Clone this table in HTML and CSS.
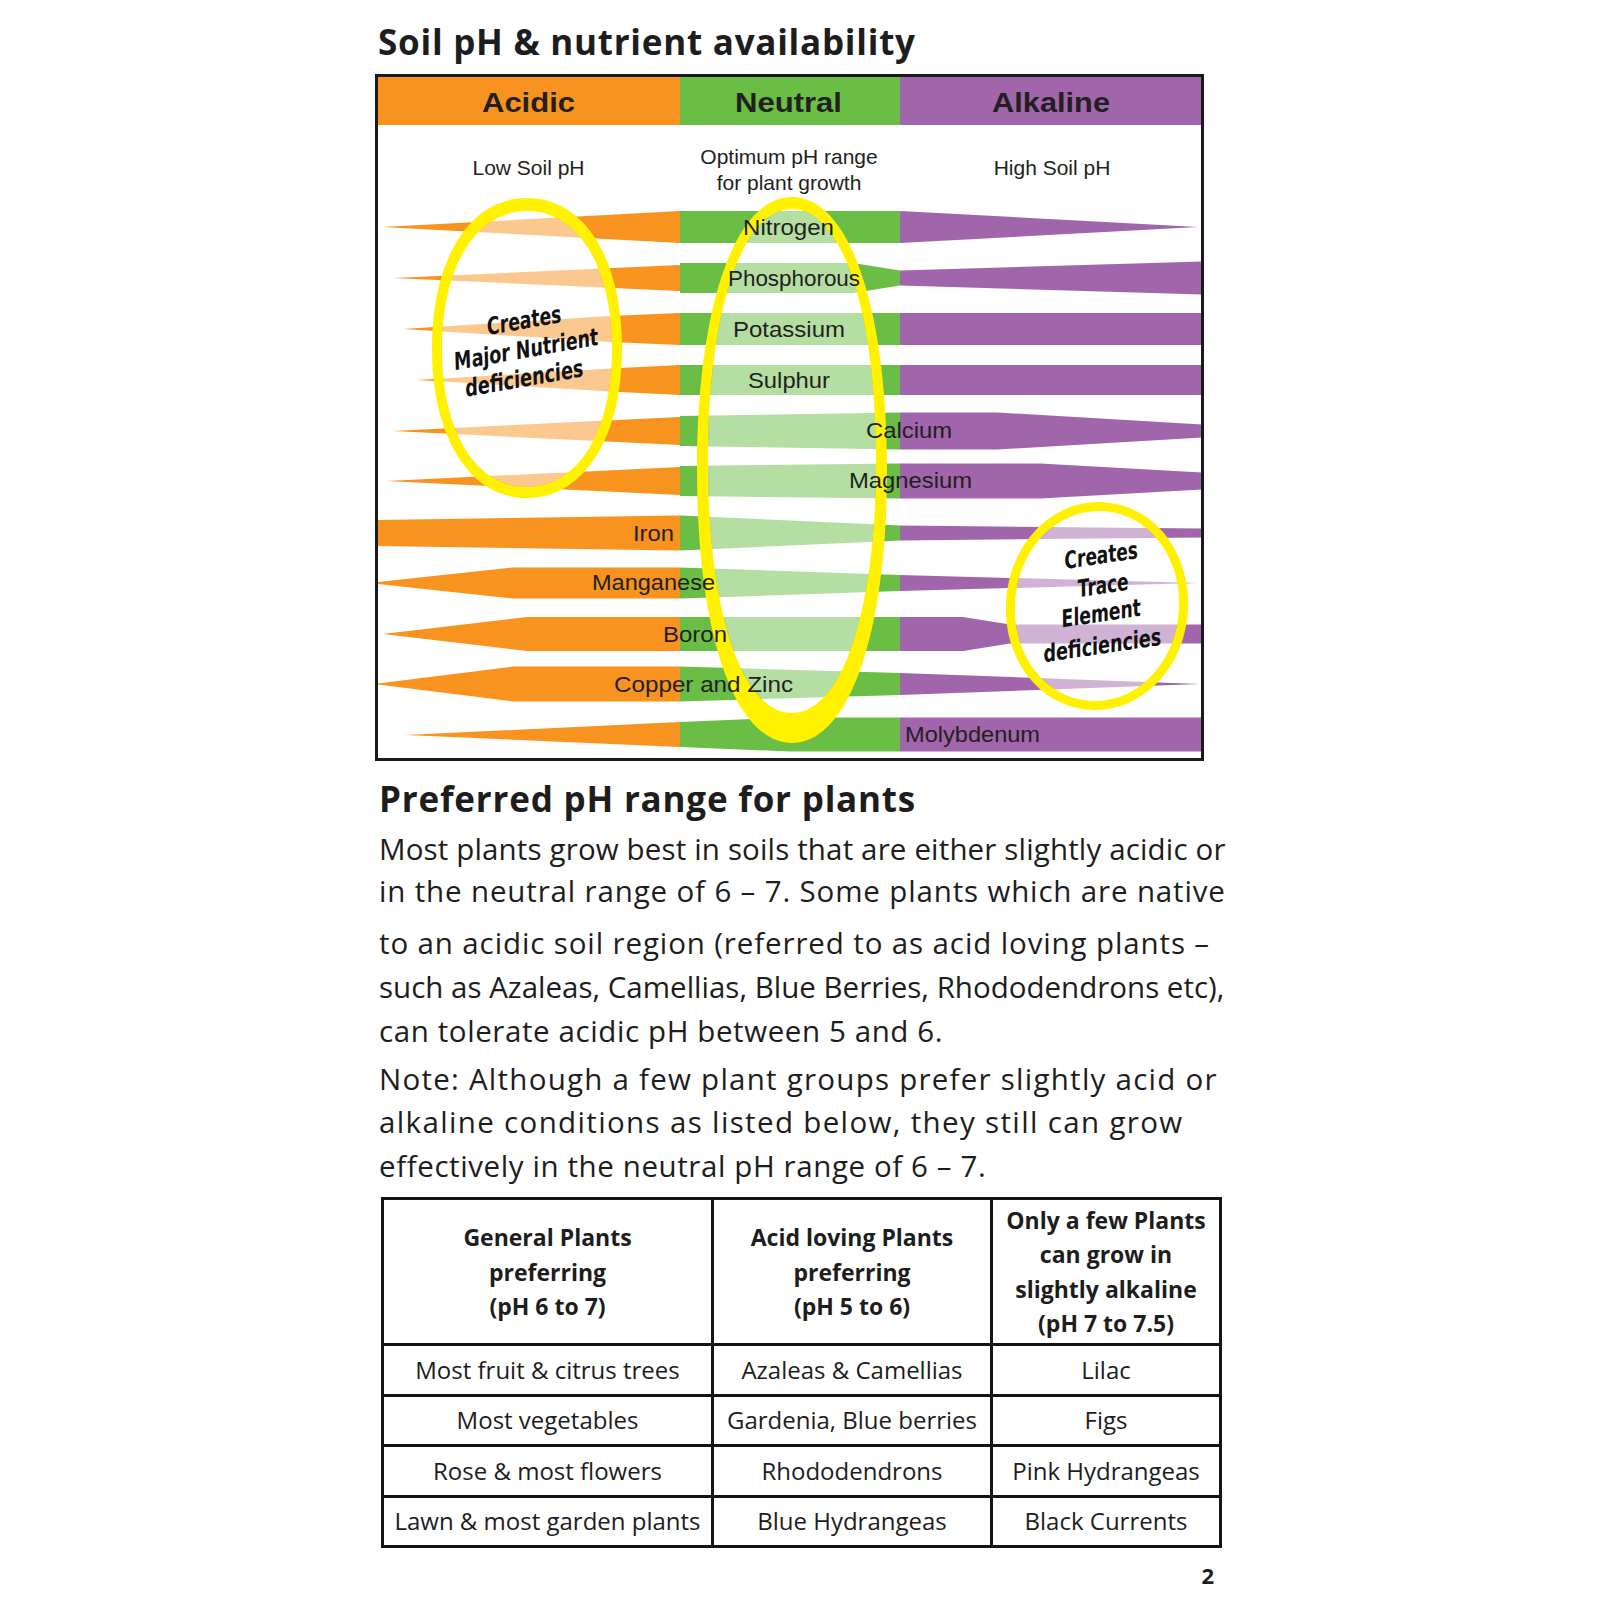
FILE: index.html
```html
<!DOCTYPE html>
<html lang="en">
<head>
<meta charset="utf-8">
<title>Soil pH &amp; nutrient availability</title>
<link rel="stylesheet" href="styles.css">
</head>
<body>
<div class="page">
  <h1 class="title">Soil pH &amp; nutrient availability</h1>

  <svg class="chart" width="829" height="688" viewBox="375 74 829 688" xmlns="http://www.w3.org/2000/svg">
    <defs>
      <linearGradient id="zones" gradientUnits="userSpaceOnUse" x1="378" y1="0" x2="1202" y2="0">
        <stop offset="0" stop-color="#F7931E"/>
        <stop offset="0.3665" stop-color="#F7931E"/>
        <stop offset="0.3665" stop-color="#6ABD45"/>
        <stop offset="0.6335" stop-color="#6ABD45"/>
        <stop offset="0.6335" stop-color="#A065AB"/>
        <stop offset="1" stop-color="#A065AB"/>
      </linearGradient>
    </defs>

    <rect class="band" x="378" y="77" width="824" height="48"/>
    <text class="ch-h" x="528.5" y="112" text-anchor="middle" textLength="93" lengthAdjust="spacingAndGlyphs">Acidic</text>
    <text class="ch-h" x="788.5" y="112" text-anchor="middle" textLength="107" lengthAdjust="spacingAndGlyphs">Neutral</text>
    <text class="ch-h" x="1051" y="112" text-anchor="middle" textLength="118" lengthAdjust="spacingAndGlyphs">Alkaline</text>

    <text class="ch-s" x="528.5" y="175" text-anchor="middle">Low Soil pH</text>
    <text class="ch-s" x="789" y="164" text-anchor="middle">Optimum pH range</text>
    <text class="ch-s" x="789" y="190" text-anchor="middle">for plant growth</text>
    <text class="ch-s" x="1052" y="175" text-anchor="middle">High Soil pH</text>

    <g class="rows">
      <polygon points="382,227 680,211 900,211 1198,227 900,243 680,243"/>
      <polygon points="393,278 680,265 680,263 853,263 900,270.5 1202,261.5 1202,294.5 900,285.5 853,293 680,293 680,291"/>
      <polygon points="403,329 610,316 680,313 1202,313 1202,345 680,345 610,342"/>
      <polygon points="417,380 620,368 680,365 1202,365 1202,395 680,395 620,392"/>
      <polygon points="392,431 680,417 680,416 900,412.5 997,412.5 1202,424.5 1202,437.5 997,449.5 900,449.5 680,446 680,445"/>
      <polygon points="386,481 680,467 680,466 900,463.5 1040,463.5 1202,472.5 1202,489.5 1040,498.5 900,498.5 680,496 680,495"/>
      <polygon points="378,520 680,515.5 900,525.5 1202,528.5 1202,537.5 900,540.5 680,550.5 378,546"/>
      <polygon points="378,582 513,567.5 680,567.5 900,575 1197,583 900,591 680,598.5 513,598.5 378,584"/>
      <polygon points="383,634 527,617 963,617 1010,624.5 1202,624.5 1202,643.5 1010,643.5 963,651 527,651"/>
      <polygon points="378,683.5 513,666.5 680,666.5 900,673 1200,684 900,695 680,701.5 513,701.5 378,684.5"/>
      <polygon points="405,735 680,722 790,717.5 1202,717.5 1202,751.5 790,751.5 680,747"/>
    </g>

    <g class="haze">
      <path d="M612,349 C612,432 578,487 527,487 C476,487 442,432 442,349 C442,266 476,211 527,211 C578,211 612,266 612,349 Z"/>
      <path d="M876,461 C876,612 842,713 792,713 C742,713 708,612 708,461 C708,310 742,209 792,209 C842,209 876,310 876,461 Z"/>
      <path transform="rotate(5 1097 606)" d="M1179,606 C1179,659 1143,701 1097,701 C1051,701 1015,659 1015,606 C1015,553 1051,511 1097,511 C1143,511 1179,553 1179,606 Z"/>
    </g>

    <g class="ring">
      <path d="M622,348 C622,438 584,498 527,498 C470,498 432,438 432,348 C432,258 470,198 527,198 C584,198 622,258 622,348 Z M612,349 C612,432 578,487 527,487 C476,487 442,432 442,349 C442,266 476,211 527,211 C578,211 612,266 612,349 Z"/>
      <path d="M887,470 C887,634 849,743 792,743 C735,743 697,634 697,470 C697,306 735,197 792,197 C849,197 887,306 887,470 Z M876,461 C876,612 842,713 792,713 C742,713 708,612 708,461 C708,310 742,209 792,209 C842,209 876,310 876,461 Z"/>
      <path transform="rotate(5 1097 606)" d="M1188,606 C1188,664 1148,710 1097,710 C1046,710 1006,664 1006,606 C1006,548 1046,502 1097,502 C1148,502 1188,548 1188,606 Z M1179,606 C1179,659 1143,701 1097,701 C1051,701 1015,659 1015,606 C1015,553 1051,511 1097,511 C1143,511 1179,553 1179,606 Z"/>
    </g>

    <text class="ch-l" x="743" y="235" textLength="91" lengthAdjust="spacingAndGlyphs">Nitrogen</text>
    <text class="ch-l" x="728" y="286" textLength="132" lengthAdjust="spacingAndGlyphs">Phosphorous</text>
    <text class="ch-l" x="733" y="337" textLength="112" lengthAdjust="spacingAndGlyphs">Potassium</text>
    <text class="ch-l" x="748" y="388" textLength="82" lengthAdjust="spacingAndGlyphs">Sulphur</text>
    <text class="ch-l" x="866" y="438" textLength="86" lengthAdjust="spacingAndGlyphs">Calcium</text>
    <text class="ch-l" x="849" y="488" textLength="123" lengthAdjust="spacingAndGlyphs">Magnesium</text>
    <text class="ch-l" x="633" y="540.5" textLength="41" lengthAdjust="spacingAndGlyphs">Iron</text>
    <text class="ch-l" x="592" y="590" textLength="123" lengthAdjust="spacingAndGlyphs">Manganese</text>
    <text class="ch-l" x="663" y="642" textLength="64" lengthAdjust="spacingAndGlyphs">Boron</text>
    <text class="ch-l" x="614" y="692" textLength="179" lengthAdjust="spacingAndGlyphs">Copper and Zinc</text>
    <text class="ch-l" x="905" y="742" textLength="135" lengthAdjust="spacingAndGlyphs">Molybdenum</text>

    <text class="ch-e" x="524" y="328.5" text-anchor="middle" textLength="75" lengthAdjust="spacingAndGlyphs" transform="rotate(-10 524 320)">Creates</text>
    <text class="ch-e" x="526" y="357.5" text-anchor="middle" textLength="146" lengthAdjust="spacingAndGlyphs" transform="rotate(-10 526 349)">Major Nutrient</text>
    <text class="ch-e" x="524" y="386.5" text-anchor="middle" textLength="120" lengthAdjust="spacingAndGlyphs" transform="rotate(-10 524 378)">deficiencies</text>

    <text class="ch-e" x="1101" y="563.5" text-anchor="middle" textLength="74" lengthAdjust="spacingAndGlyphs" transform="rotate(-8.5 1101 555)">Creates</text>
    <text class="ch-e" x="1103" y="593.5" text-anchor="middle" textLength="51" lengthAdjust="spacingAndGlyphs" transform="rotate(-8.5 1103 585)">Trace</text>
    <text class="ch-e" x="1101" y="621.5" text-anchor="middle" textLength="80" lengthAdjust="spacingAndGlyphs" transform="rotate(-8.5 1101 613)">Element</text>
    <text class="ch-e" x="1102" y="653.5" text-anchor="middle" textLength="119" lengthAdjust="spacingAndGlyphs" transform="rotate(-8.5 1102 645)">deficiencies</text>

    <rect class="frame" x="376.5" y="75.5" width="826" height="684"/>
  </svg>

  <h2 class="subtitle">Preferred pH range for plants</h2>
  <p class="para para-a">
    <span class="ln ln1">Most plants grow best in soils that are either slightly acidic or</span>
    <span class="ln ln2">in the neutral range of 6 – 7. Some plants which are native</span>
  </p>
  <p class="para para-b">
    <span class="ln ln3">to an acidic soil region (referred to as acid loving plants –</span>
    <span class="ln ln4">such as Azaleas, Camellias, Blue Berries, Rhododendrons etc),</span>
    <span class="ln ln5">can tolerate acidic pH between 5 and 6.</span>
  </p>
  <p class="para para-c">
    <span class="ln ln6">Note: Although a few plant groups prefer slightly acid or</span>
    <span class="ln ln7">alkaline conditions as listed below, they still can grow</span>
    <span class="ln ln8">effectively in the neutral pH range of 6 – 7.</span>
  </p>

  <table class="plants">
    <colgroup>
      <col class="c1">
      <col class="c2">
      <col class="c3">
    </colgroup>
    <tr class="head">
      <th>General Plants<br>preferring<br>(pH 6 to 7)</th>
      <th>Acid loving Plants<br>preferring<br>(pH 5 to 6)</th>
      <th>Only a few Plants<br>can grow in<br>slightly alkaline<br>(pH 7 to 7.5)</th>
    </tr>
    <tr class="row">
      <td>Most fruit &amp; citrus trees</td>
      <td>Azaleas &amp; Camellias</td>
      <td>Lilac</td>
    </tr>
    <tr class="row">
      <td>Most vegetables</td>
      <td>Gardenia, Blue berries</td>
      <td>Figs</td>
    </tr>
    <tr class="row">
      <td>Rose &amp; most flowers</td>
      <td>Rhododendrons</td>
      <td>Pink Hydrangeas</td>
    </tr>
    <tr class="row">
      <td>Lawn &amp; most garden plants</td>
      <td>Blue Hydrangeas</td>
      <td>Black Currents</td>
    </tr>
  </table>

  <div class="pagenum">2</div>
</div>
</body>
</html>
```

FILE: styles.css
```css
* {
  box-sizing: border-box;
}

body {
  margin: 0;
  background: #ffffff;
  font-family: "Open Sans", Lato, "Liberation Sans", sans-serif;
  color: #1d1d1d;
}

.page {
  width: 1600px;
  height: 1600px;
  padding-left: 375px;
  overflow: hidden;
}

.title {
  margin: 0;
  height: 74px;
  padding: 9px 0 0 3px;
  font-size: 35px;
  line-height: 65px;
  font-weight: 700;
  letter-spacing: 0.75px;
  white-space: nowrap;
}

.chart {
  display: block;
}

.band,
.rows polygon {
  fill: url(#zones);
}

.haze path {
  fill: #ffffff;
  fill-opacity: 0.5;
}

.ring path {
  fill: #FFF100;
  fill-rule: evenodd;
}

.frame {
  fill: none;
  stroke: #1a1a1a;
  stroke-width: 3;
}

.ch-h {
  font-family: "Liberation Sans", Arial, sans-serif;
  font-weight: 700;
  font-size: 28px;
  fill: #231f20;
}

.ch-s {
  font-family: "Liberation Sans", Arial, sans-serif;
  font-size: 21px;
  fill: #231f20;
}

.ch-l {
  font-family: "Liberation Sans", Arial, sans-serif;
  font-size: 22px;
  fill: #231f20;
}

.ch-e {
  font-family: "DejaVu Sans Condensed", "Liberation Sans", sans-serif;
  font-weight: 700;
  font-style: italic;
  font-size: 24px;
  fill: #111111;
}

.subtitle {
  margin: 15.4px 0 0;
  padding-left: 4px;
  font-size: 35px;
  line-height: 44px;
  font-weight: 700;
  letter-spacing: 0.8px;
  white-space: nowrap;
}

.para {
  margin: 0;
  padding-left: 4px;
  font-size: 29.5px;
  white-space: nowrap;
}

.ln {
  display: block;
}

.ln1 { letter-spacing: 0.15px; }
.ln2 { letter-spacing: 0.85px; }
.ln3 { letter-spacing: 0.88px; }
.ln4 { letter-spacing: 0; }
.ln5 { letter-spacing: 0.6px; }
.ln6 { letter-spacing: 1.25px; }
.ln7 { letter-spacing: 1.35px; }
.ln8 { letter-spacing: 0.6px; }

.para-a {
  margin-top: 7px;
  line-height: 42px;
}

.para-b {
  margin-top: 9px;
  line-height: 44px;
}

.para-c {
  margin-top: 3.5px;
  line-height: 43.5px;
}

.plants {
  margin: 10px 0 0 6px;
  width: 838px;
  border-collapse: collapse;
  table-layout: fixed;
  font-size: 24px;
}

.plants .c1 { width: 330px; }
.plants .c2 { width: 279px; }
.plants .c3 { width: 229px; }

.plants th,
.plants td {
  border: 3px solid #141414;
  text-align: center;
  vertical-align: middle;
  padding: 0;
  white-space: nowrap;
}

.plants th {
  font-size: 23px;
  font-weight: 700;
  line-height: 34.5px;
}

.plants .head {
  height: 146px;
}

.plants .row {
  height: 50.4px;
}

.plants td {
  line-height: 30px;
}

.pagenum {
  width: 847px;
  margin-top: 12px;
  padding-right: 8px;
  text-align: right;
  font-size: 22px;
  line-height: 30px;
  font-weight: 700;
}
```
